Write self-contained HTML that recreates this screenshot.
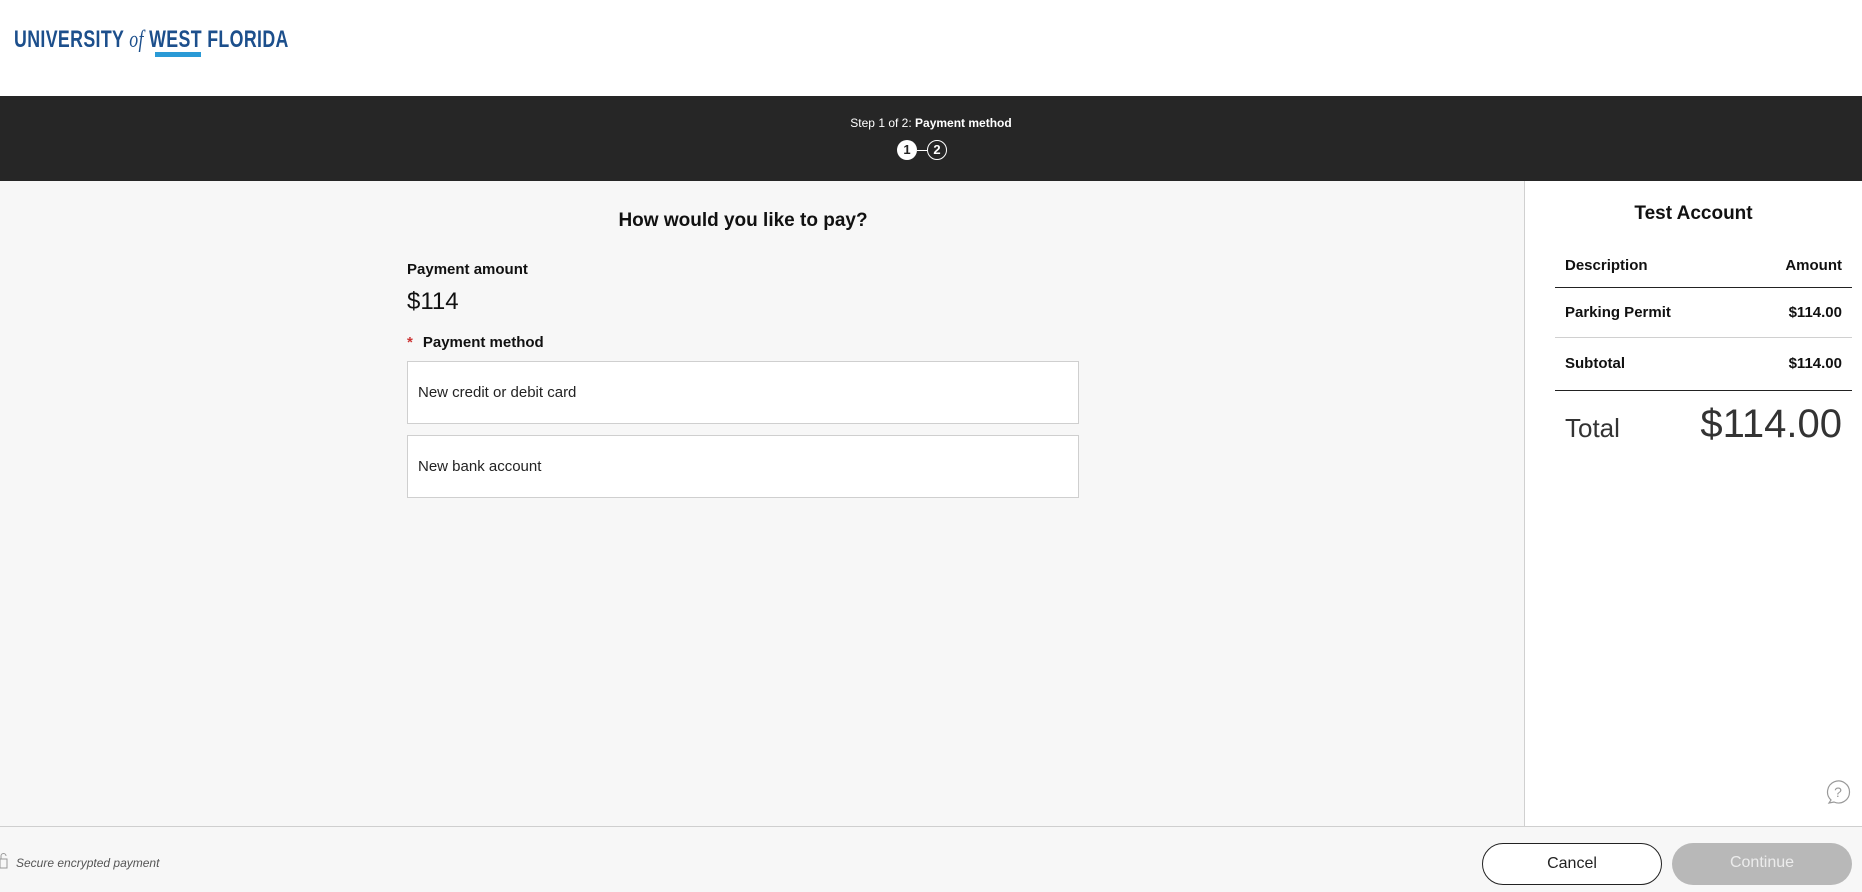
<!DOCTYPE html>
<html><head><meta charset="utf-8"><style>
*{margin:0;padding:0;box-sizing:border-box}
body{width:1862px;height:892px;position:relative;overflow:hidden;background:#f7f7f7;font-family:"Liberation Sans",sans-serif;color:#111}
.a{position:absolute;white-space:nowrap}
#hdr{position:absolute;left:0;top:0;width:1862px;height:96px;background:#fff}
#bar{position:absolute;left:0;top:96px;width:1862px;height:85px;background:#262626}
#rp{position:absolute;left:1524px;top:181px;width:338px;height:646px;background:#fff;border-left:1px solid #d0d0d0}
#ft{position:absolute;left:0;top:826px;width:1862px;height:66px;background:#f7f7f7;border-top:1px solid #cfcfcf}
.box{position:absolute;left:407px;width:672px;height:63px;background:#fff;border:1px solid #cfcfcf;font-size:15px;color:#222;padding:22px 0 0 10px}
.ln{position:absolute;left:1555px;width:297px;height:1px}
.btn{position:absolute;top:843px;width:180px;height:42px;border-radius:21px;font-size:16px;text-align:center;line-height:40px}
</style></head><body>
<div id="hdr"></div>
<div class="a" style="left:14px;top:26px;font-size:24px;color:#1c4f8c;letter-spacing:0.5px;transform:scaleX(0.74);transform-origin:left;font-weight:bold">UNIVERSITY <span style="font-family:'Liberation Serif',serif;font-style:italic;font-weight:normal">of</span> WEST FLORIDA</div>
<div class="a" style="left:155px;top:52px;width:46px;height:5px;background:#2a9ad6"></div>
<div id="bar"></div>
<div class="a" style="left:0;width:1862px;text-align:center;top:116px;font-size:12px;color:#fff">Step 1 of 2: <b>Payment method</b></div>
<div class="a" style="left:897px;top:140px;width:20px;height:20px;border-radius:50%;background:#fff;color:#222;font-size:13px;font-weight:bold;text-align:center;line-height:20px">1</div>
<div class="a" style="left:917px;top:150px;width:10px;height:1px;background:#fff"></div>
<div class="a" style="left:927px;top:140px;width:20px;height:20px;border-radius:50%;border:1.5px solid #fff;color:#fff;font-size:13px;font-weight:bold;text-align:center;line-height:17px">2</div>
<div class="a" style="left:407px;width:672px;text-align:center;top:210px;font-size:19px;font-weight:bold;color:#111">How would you like to pay?</div>
<div class="a" style="left:407px;top:261px;font-size:15px;font-weight:bold">Payment amount</div>
<div class="a" style="left:407px;top:288px;font-size:24px">$114</div>
<div class="a" style="left:407px;top:334px;font-size:15px;font-weight:bold"><span style="color:#c33;margin-right:10px">*</span>Payment method</div>
<div class="box" style="top:361px">New credit or debit card</div>
<div class="box" style="top:435px">New bank account</div>
<div id="rp"></div>
<div class="a" style="left:1525px;width:337px;text-align:center;top:203px;font-size:19px;font-weight:bold">Test Account</div>
<div class="a" style="left:1565px;top:257px;font-size:15px;font-weight:bold">Description</div>
<div class="a" style="right:20px;top:257px;font-size:15px;font-weight:bold">Amount</div>
<div class="ln" style="top:287px;background:#222"></div>
<div class="a" style="left:1565px;top:304px;font-size:15px;font-weight:bold">Parking Permit</div>
<div class="a" style="right:20px;top:304px;font-size:15px;font-weight:bold">$114.00</div>
<div class="ln" style="top:337px;background:#d0d0d0"></div>
<div class="a" style="left:1565px;top:355px;font-size:15px;font-weight:bold">Subtotal</div>
<div class="a" style="right:20px;top:355px;font-size:15px;font-weight:bold">$114.00</div>
<div class="ln" style="top:390px;background:#222"></div>
<div class="a" style="left:1565px;top:413px;font-size:26px;color:#333">Total</div>
<div class="a" style="right:20px;top:402px;font-size:40px;color:#333">$114.00</div>
<svg class="a" style="left:1825px;top:779px" width="26" height="26" viewBox="0 0 26 26"><path d="M6 21 A11 11 0 1 1 9 23 L4 24 Z" fill="none" stroke="#999" stroke-width="1.2"/><text x="13" y="18" font-size="14" text-anchor="middle" fill="#999" font-family="Liberation Sans">?</text></svg>
<div id="ft"></div>
<svg class="a" style="left:0;top:853px" width="8" height="16"><rect x="0" y="6" width="7" height="9" fill="none" stroke="#999"/><path d="M1 6V3a2.5 2.5 0 0 1 5 0" fill="none" stroke="#999"/></svg>
<div class="a" style="left:16px;top:856px;font-size:12px;font-style:italic;color:#555">Secure encrypted payment</div>
<div class="btn" style="left:1482px;background:#fff;border:1px solid #222;color:#222">Cancel</div>
<div class="btn" style="left:1672px;background:#b8b8b8;color:#ececec">Continue</div>
</body></html>
